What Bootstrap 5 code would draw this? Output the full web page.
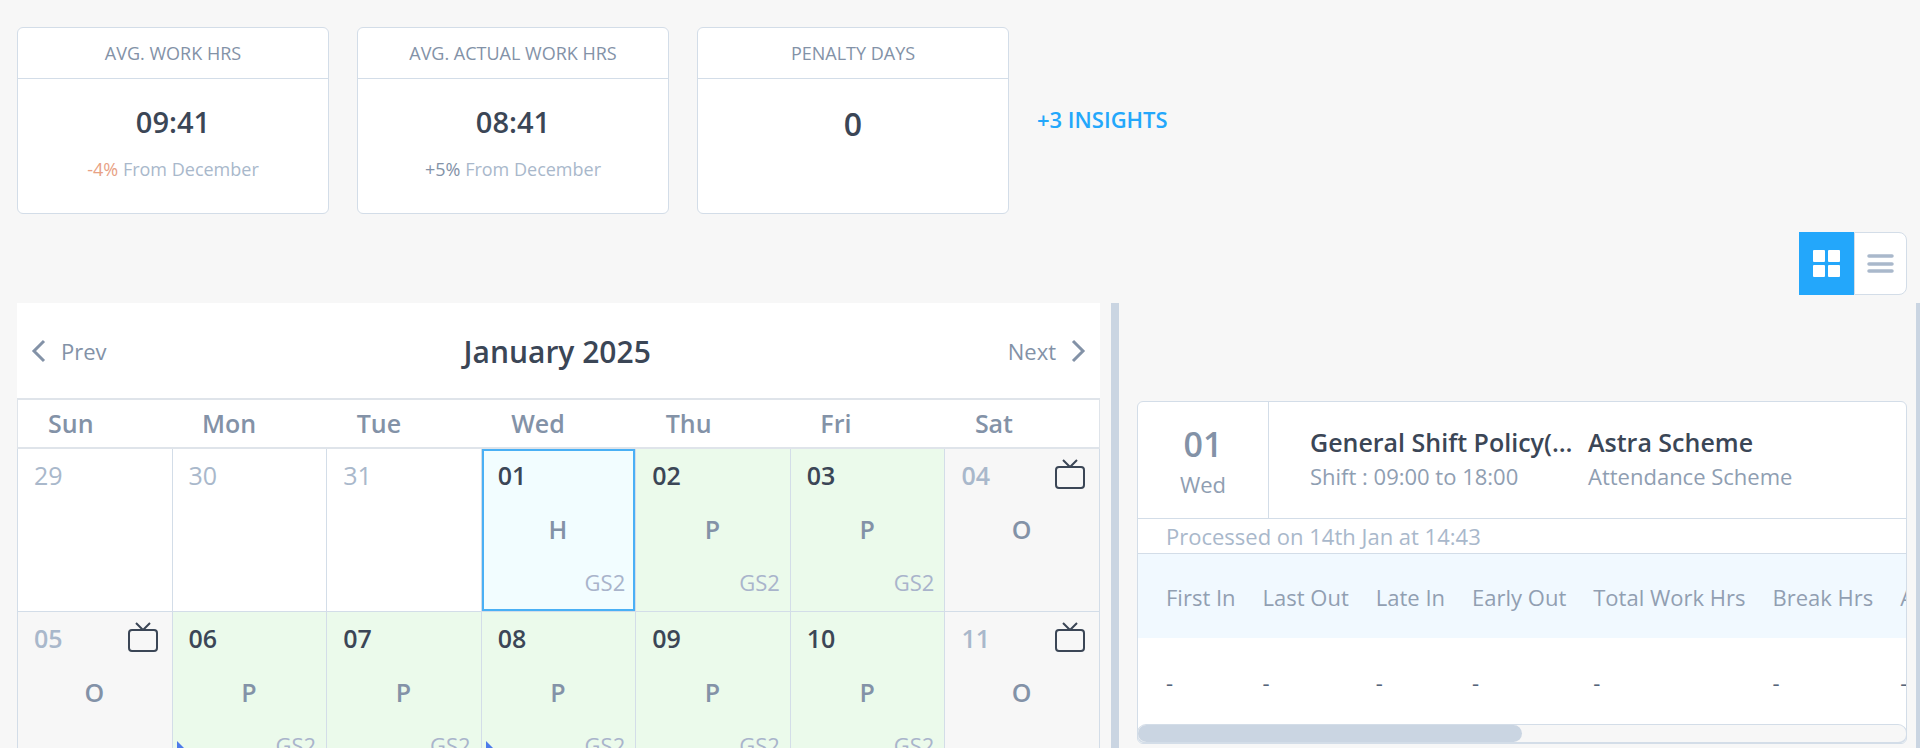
<!DOCTYPE html>
<html lang="en">
<head>
<meta charset="utf-8">
<meta name="viewport" content="width=device-width, initial-scale=1">
<title>Attendance</title>
<link href="https://cdn.jsdelivr.net/npm/bootstrap@5.3.0/dist/css/bootstrap.min.css" rel="stylesheet">
<style>
:root{--line:#d3dde8;--bar:#cad5e2;--ink:#3b4656;--slate:#8392a7;--pale:#a9b8cb;--blue:#23a7fb}
html,body{height:100%}
body{background:#f7f7f7;font-family:"Open Sans","Noto Sans",sans-serif;color:var(--slate);overflow:hidden}
.insights{padding:27px 17px 0;gap:28px}
.insight{flex:0 1 312px;height:187px;border:1px solid var(--line);border-radius:6px}
.insight h2{font-size:18px;line-height:26px;padding:12px 0;margin:0;border-bottom:1px solid var(--line);font-weight:400;color:var(--slate)}
.figure-text{font-size:29px;line-height:40px;font-weight:600;color:var(--ink);margin-top:23px}
.figure-text.count{font-size:32px;margin-top:25px}
.trend{font-size:18px;line-height:26px;color:var(--pale);margin-top:14px}
.drop{color:#e8a184}
.rise{color:var(--slate)}
.more{color:var(--blue);font-size:22px;line-height:30px;font-weight:600;padding-bottom:4px}
.switcher{padding:18px 13px 8px}
.switcher .btn{height:63px;border:1px solid var(--line);border-radius:0 8px 8px 0;background:#fff;width:53px;padding:0}
.switcher .btn.active{background:var(--blue);border-color:var(--blue);border-radius:0;width:55px}
.panes{padding-left:17px;flex:1 1 auto;min-height:0}
.calendar{flex:0 1 1083px;overflow:hidden}
.month-bar{height:95px;padding:0 14px}
.month-bar h1{font-size:30px;line-height:40px;font-weight:600;color:var(--ink);margin:3px 0 0}
.month-bar .btn{font-size:22px;line-height:30px;padding:0;gap:15px;color:var(--slate);border:0}
.days{table-layout:fixed;border-collapse:collapse;width:100%;background:#fff}
.days th{font-size:25px;line-height:34px;font-weight:600;padding:6px 0 7px 30px;border-top:2px solid #dfe4ea;border-bottom:2px solid #dfe4ea;color:var(--slate)}
.days thead{border:solid #dfe4ea;border-width:0 1px}
.days td{border:1px solid var(--line);height:163px;padding:0;vertical-align:top;position:relative}
.cell{height:162px;padding:9px 13px 9px 16px;font-size:25px;line-height:34px}
.cell .num{font-weight:600;color:var(--ink)}
.cell .num.off{color:var(--pale)}
.cell .num.out{color:var(--pale);font-weight:400}
.state{font-weight:600;margin-top:20px;padding-right:4px;text-align:center}
.shift{font-size:22px;color:#a9b4cb;text-align:right;margin:19px -3px 0 0}
.present{background:#ebfaeb}
.rest{background:#f7f7f7}
.days td.chosen{background:#f2fdff;box-shadow:inset 0 0 0 2px #4ab0f5}
.flag{position:absolute;left:4px;bottom:19px;width:0;height:0;border:7px solid transparent;border-left-color:#4d7bea;border-bottom-color:#4d7bea}
.splitter{flex:0 0 8px;margin-left:11px;background:var(--bar)}
.detail{flex:1 1 0;min-width:0;padding:98px 9px 0 18px}
.sheet{border:1px solid var(--line);border-radius:6px;background:#fff;overflow:hidden}
.date-box{width:131px;border-right:1px solid var(--line);padding:22px 0 18px}
.date-box b{font-size:34px;line-height:40px;font-weight:600;display:block;margin-bottom:4px}
.label-text{font-size:22px;line-height:32px;color:#8f9eb2}
.policy{padding:22px 41px 0;gap:1px}
.policy h3{font-size:25px;line-height:36px;font-weight:600;color:var(--ink);margin:0}
.policy-name{width:277px}
.stamp{border:solid var(--line);border-width:1px 0;font-size:22px;line-height:34px;padding-left:28px;color:var(--pale)}
.punches{overflow:hidden}
.hours{white-space:nowrap;font-size:22px;line-height:30px;width:max-content}
.hours th{font-weight:400;background:#f1f9ff;padding:28px 0 26px 27px;color:#919fb2}
.hours th:first-child,.hours td:first-child{padding-left:28px}
.hours td{padding:29px 0 27px 27px;color:#56657a}
.track{height:20px;border:1px solid var(--line);border-bottom-width:2px;border-radius:9px;background:#f7f7f7;margin:0 -1px -1px}
.thumb{height:100%;border-radius:9px;background:var(--bar)}
.edge{flex:0 0 4px;background:var(--bar)}
</style>
</head>
<body>
<div class="d-flex flex-column h-100">
<section class="insights d-flex align-items-center">
<article class="insight bg-white text-center"><h2>AVG. WORK HRS</h2><div class="figure-text">09:41</div><div class="trend"><span class="drop">-4%</span> From December</div></article>
<article class="insight bg-white text-center"><h2>AVG. ACTUAL WORK HRS</h2><div class="figure-text">08:41</div><div class="trend"><span class="rise">+5%</span> From December</div></article>
<article class="insight bg-white text-center"><h2>PENALTY DAYS</h2><div class="figure-text count">0</div></article>
<a href="#" class="more text-decoration-none">+3 INSIGHTS</a>
</section>
<div class="switcher d-flex justify-content-end">
<button class="btn active" aria-label="Calendar view"><svg width="28" height="28" viewBox="0 0 28 28" fill="#fff"><rect x="0" y="0" width="12" height="12" rx="1"/><rect x="15" y="0" width="12" height="12" rx="1"/><rect x="0" y="15" width="12" height="12" rx="1"/><rect x="15" y="15" width="12" height="12" rx="1"/></svg></button>
<button class="btn" aria-label="List view"><svg width="28" height="24" viewBox="0 0 28 24" stroke="#a9b8cb" stroke-width="3.5" stroke-linecap="round"><path d="M2 4h23M2 12h23M2 19h23"/></svg></button>
</div>
<main class="panes d-flex">
<section class="calendar">
<header class="month-bar bg-white d-flex justify-content-between align-items-center">
<button class="btn d-flex align-items-center"><svg width="15" height="24" viewBox="0 0 15 24" fill="none" stroke="#8392a7" stroke-width="3"><path d="M13 2L3 12l10 10"/></svg>Prev</button>
<h1>January 2025</h1>
<button class="btn d-flex align-items-center">Next<svg width="15" height="24" viewBox="0 0 15 24" fill="none" stroke="#8392a7" stroke-width="3"><path d="M2 2l10 10L2 22"/></svg></button>
</header>
<table class="days">
<thead><tr><th>Sun</th><th>Mon</th><th>Tue</th><th>Wed</th><th>Thu</th><th>Fri</th><th>Sat</th></tr></thead>
<tbody id="weeks"></tbody>
</table>
</section>
<div class="splitter"></div>
<section class="detail">
<div class="sheet">
<div class="d-flex">
<div class="date-box text-center flex-shrink-0"><b>01</b><div class="label-text">Wed</div></div>
<div class="policy d-flex">
<div class="policy-name"><h3 class="text-truncate">General Shift Policy(GS2)</h3><div class="label-text">Shift : 09:00 to 18:00</div></div>
<div><h3>Astra Scheme</h3><div class="label-text">Attendance Scheme</div></div>
</div>
</div>
<div class="stamp">Processed on 14th Jan at 14:43</div>
<div class="punches"><table class="hours">
<thead><tr><th>First In</th><th>Last Out</th><th>Late In</th><th>Early Out</th><th>Total Work Hrs</th><th>Break Hrs</th><th>Actual Work Hrs</th></tr></thead>
<tbody><tr><td>-</td><td>-</td><td>-</td><td>-</td><td>-</td><td>-</td><td>-</td></tr></tbody>
</table></div>
<div class="track"><div class="thumb w-50"></div></div>
</div>
</section>
<div class="edge ms-auto"></div>
</main>
</div>
<script src="https://cdn.jsdelivr.net/npm/bootstrap@5.3.0/dist/js/bootstrap.bundle.min.js"></script>
<script>
const tv='<svg width="32" height="32" viewBox="0 0 32 32" fill="none" stroke="#3b4656" stroke-width="2" stroke-linejoin="round"><rect x="2" y="9" width="28" height="21" rx="3"/><path d="M9 2l7 7 7-7"/></svg>';
// number, kind, status, shift, flagged
const weeks=[
[['29','out'],['30','out'],['31','out'],['01','chosen','H','GS2'],['02','present','P','GS2'],['03','present','P','GS2'],['04','rest','O']],
[['05','rest','O'],['06','present','P','GS2',1],['07','present','P','GS2'],['08','present','P','GS2',1],['09','present','P','GS2'],['10','present','P','GS2'],['11','rest','O']]];
document.getElementById('weeks').innerHTML=weeks.map(w=>'<tr>'+w.map(([n,k,s,g,f])=>
`<td class="${k}"><div class="cell"><div class="d-flex justify-content-between"><span class="num ${k==='rest'?'off':k==='out'?'out':''}">${n}</span>${k==='rest'?tv:''}</div>${s?`<div class="state">${s}</div>`:''}${g?`<div class="shift">${g}</div>`:''}</div>${f?'<i class="flag"></i>':''}</td>`).join('')+'</tr>').join('');
</script>
</body>
</html>
